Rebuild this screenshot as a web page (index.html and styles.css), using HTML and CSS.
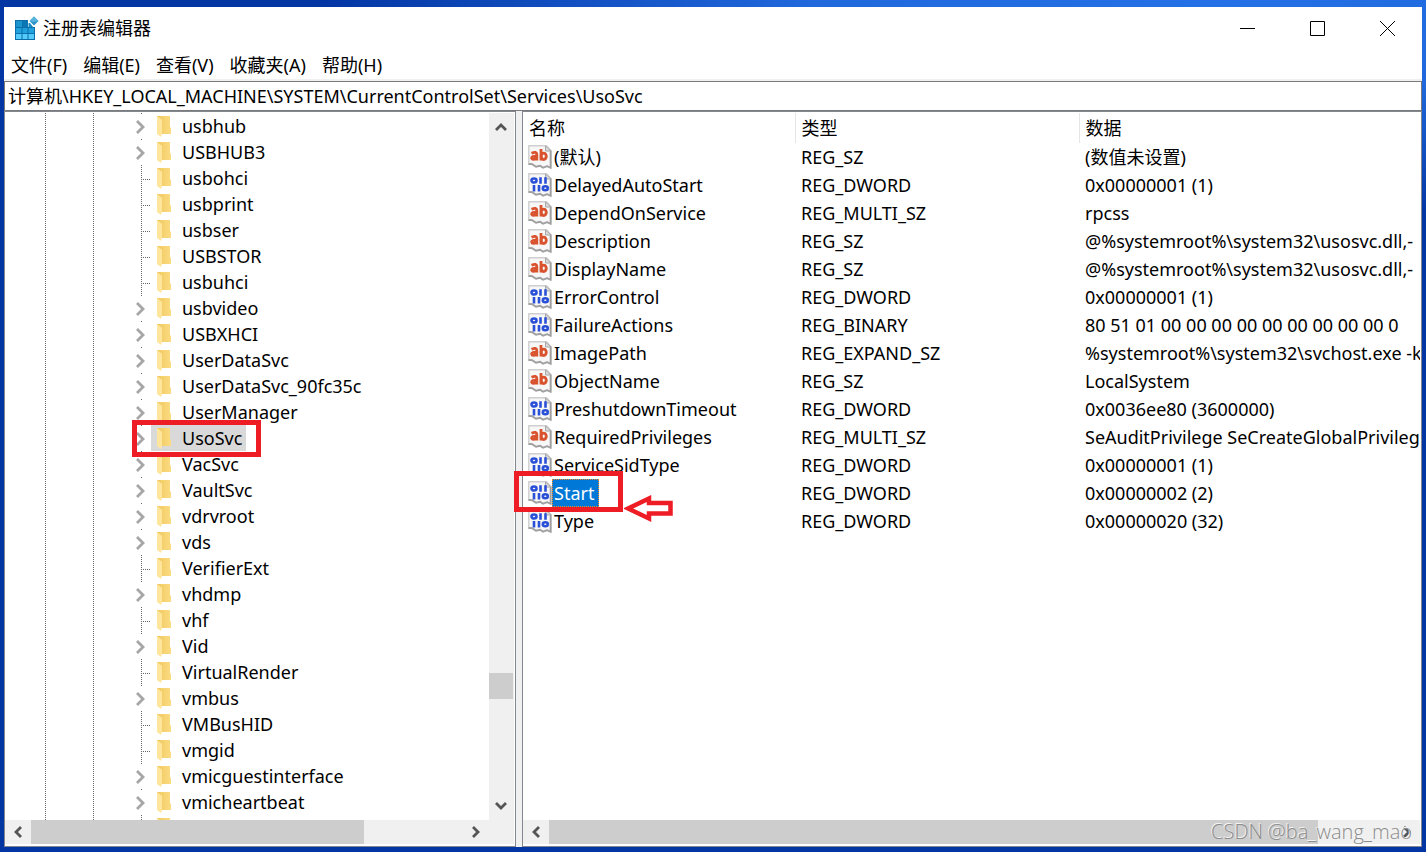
FILE: index.html
```html
<!DOCTYPE html>
<html lang="zh-CN">
<head>
<meta charset="utf-8">
<title>注册表编辑器</title>
<link rel="stylesheet" href="styles.css">
</head>
<body>
<svg class="symbols" aria-hidden="true">
  <linearGradient id="gold" x1="0" x2="1"><stop offset="0" stop-color="#efc85f"/><stop offset="1" stop-color="#fcdc82"/></linearGradient>
  <symbol id="folder" viewBox="0 0 15 22">
    <path d="M0 0H13V11L14 12V18H4Z" fill="url(#gold)"/>
    <path d="M0 0L5 4V18L4 21L0 18Z" fill="#ffe69c"/>
  </symbol>
  <symbol id="chevron" viewBox="0 0 10 14"><path d="M1 1L7 7L1 13" fill="none" stroke="#a6a6a6" stroke-width="2.8"/></symbol>
  <symbol id="arrow" viewBox="0 0 12 12"><path d="M9 1L4 6L9 11" fill="none" stroke="#555" stroke-width="2.8"/></symbol>
  <symbol id="page" viewBox="0 0 24 24">
    <path d="M.8 .8H18.5L23 5.5V22.5L19 21L15 22.5L12 20.5L8 21.5L4 19L.8 19Z" fill="#f7f7f7" stroke="#cfcfcf" stroke-width="1.4"/>
    <path d="M22.600 5.500V22.800L19 21.200L15 22.800L12 20.800L8 21.800L4 19.200L.5 19" fill="none" stroke="#a0a0a0" stroke-width="1.8"/>
    <path d="M17.500 1V6H23Z" fill="#ddd" stroke="#a8a8a8"/>
  </symbol>
  <symbol id="sz" viewBox="0 0 24 24">
    <use href="#page"/>
    <g fill="none" stroke="#d9532f" stroke-width="2.8">
      <path d="M3.500 8.200Q8.800 6 8.800 9.500V15.500M8.800 11.200Q3.400 10.800 3.600 13Q4.400 15.600 8.600 13.200"/>
      <path d="M13 4V15.500"/><ellipse cx="15.700" cy="11.300" rx="2.600" ry="3.200"/>
    </g>
  </symbol>
  <symbol id="bin" viewBox="0 0 24 24">
    <use href="#page"/>
    <g fill="none" stroke="#2b50d8" stroke-width="2.6">
      <ellipse cx="6" cy="7.500" rx="2.500" ry="2"/><path d="M12.500 4.200V10.800M17.500 4.200V10.800"/>
      <path d="M6 12V18.500M11 12V18.500"/><ellipse cx="17.300" cy="15.200" rx="2.500" ry="2"/>
    </g>
  </symbol>
</svg>

<main class="window">
  <header class="titlebar">
    <svg class="app-icon" viewBox="0 0 24 24" aria-hidden="true">
      <path d="M0 4H20V24H0Z" fill="#0a6fa8"/>
      <path d="M1 5H7V11H1Z" fill="#1b93cc"/><path d="M7.500 5H13V11H7.500Z" fill="#0b78b5"/>
      <path d="M1 12H6.500V17H1ZM7.500 12H12.500V17H7.500ZM13.500 12H19V17H13.500Z" fill="#20a0dc"/>
      <path d="M1 18H6.500V23H1ZM7.500 18H12.500V23H7.500ZM13.500 18H19V23H13.500Z" fill="#55cbfb"/>
      <path d="M13 3H16L20 9V11H13Z" fill="#fff"/>
      <path d="M13.500 7H15L18 11H13.500Z" fill="#168bc4"/>
      <path d="M19 .5L23.500 5L19 9.500L14.500 5Z" fill="#2b95c9"/><path d="M19 .5L23.500 5L19 6L14.500 5Z" fill="#57b4dd"/>
    </svg>
    <h1>注册表编辑器</h1>
    <div class="controls">
      <button aria-label="最小化"><svg viewBox="0 0 15 15"><path d="M0 7.500H15"/></svg></button>
      <button aria-label="最大化"><svg viewBox="0 0 15 15"><path d="M.5 .5H14.500V14.500H.5Z"/></svg></button>
      <button aria-label="关闭"><svg viewBox="0 0 15 15"><path d="M0 0L15 15M15 0L0 15"/></svg></button>
    </div>
  </header>
  <nav class="menu">
    <button>文件(F)</button><button>编辑(E)</button><button>查看(V)</button><button>收藏夹(A)</button><button>帮助(H)</button>
  </nav>
  <input class="address" type="text" aria-label="地址" value="计算机\HKEY_LOCAL_MACHINE\SYSTEM\CurrentControlSet\Services\UsoSvc">

  <div class="panes">
    <section class="pane tree-pane">
      <div class="viewport">
        <ul class="tree">
          <li class="parent"><svg class="chev"><use href="#chevron"/></svg><span><svg><use href="#folder"/></svg>usbhub</span></li>
          <li class="parent"><svg class="chev"><use href="#chevron"/></svg><span><svg><use href="#folder"/></svg>USBHUB3</span></li>
          <li><span><svg><use href="#folder"/></svg>usbohci</span></li>
          <li><span><svg><use href="#folder"/></svg>usbprint</span></li>
          <li><span><svg><use href="#folder"/></svg>usbser</span></li>
          <li><span><svg><use href="#folder"/></svg>USBSTOR</span></li>
          <li><span><svg><use href="#folder"/></svg>usbuhci</span></li>
          <li class="parent"><svg class="chev"><use href="#chevron"/></svg><span><svg><use href="#folder"/></svg>usbvideo</span></li>
          <li class="parent"><svg class="chev"><use href="#chevron"/></svg><span><svg><use href="#folder"/></svg>USBXHCI</span></li>
          <li class="parent"><svg class="chev"><use href="#chevron"/></svg><span><svg><use href="#folder"/></svg>UserDataSvc</span></li>
          <li class="parent"><svg class="chev"><use href="#chevron"/></svg><span><svg><use href="#folder"/></svg>UserDataSvc_90fc35c</span></li>
          <li class="parent"><svg class="chev"><use href="#chevron"/></svg><span><svg><use href="#folder"/></svg>UserManager</span></li>
          <li class="parent"><svg class="chev"><use href="#chevron"/></svg><span class="current"><svg><use href="#folder"/></svg>UsoSvc</span></li>
          <li class="parent"><svg class="chev"><use href="#chevron"/></svg><span><svg><use href="#folder"/></svg>VacSvc</span></li>
          <li class="parent"><svg class="chev"><use href="#chevron"/></svg><span><svg><use href="#folder"/></svg>VaultSvc</span></li>
          <li class="parent"><svg class="chev"><use href="#chevron"/></svg><span><svg><use href="#folder"/></svg>vdrvroot</span></li>
          <li class="parent"><svg class="chev"><use href="#chevron"/></svg><span><svg><use href="#folder"/></svg>vds</span></li>
          <li><span><svg><use href="#folder"/></svg>VerifierExt</span></li>
          <li class="parent"><svg class="chev"><use href="#chevron"/></svg><span><svg><use href="#folder"/></svg>vhdmp</span></li>
          <li><span><svg><use href="#folder"/></svg>vhf</span></li>
          <li class="parent"><svg class="chev"><use href="#chevron"/></svg><span><svg><use href="#folder"/></svg>Vid</span></li>
          <li><span><svg><use href="#folder"/></svg>VirtualRender</span></li>
          <li class="parent"><svg class="chev"><use href="#chevron"/></svg><span><svg><use href="#folder"/></svg>vmbus</span></li>
          <li><span><svg><use href="#folder"/></svg>VMBusHID</span></li>
          <li><span><svg><use href="#folder"/></svg>vmgid</span></li>
          <li class="parent"><svg class="chev"><use href="#chevron"/></svg><span><svg><use href="#folder"/></svg>vmicguestinterface</span></li>
          <li class="parent"><svg class="chev"><use href="#chevron"/></svg><span><svg><use href="#folder"/></svg>vmicheartbeat</span></li>
          <li><span><svg><use href="#folder"/></svg></span></li>
        </ul>
      </div>
      <div class="bar vertical">
        <button aria-label="向上滚动"><svg class="up"><use href="#arrow"/></svg></button>
        <div class="track"><div class="thumb"></div></div>
        <button aria-label="向下滚动"><svg class="down"><use href="#arrow"/></svg></button>
      </div>
      <div class="bar horizontal">
        <button aria-label="向左滚动"><svg><use href="#arrow"/></svg></button>
        <div class="track"><div class="thumb"></div></div>
        <button aria-label="向右滚动"><svg class="right"><use href="#arrow"/></svg></button>
      </div>
      <div class="corner"></div>
    </section>

    <section class="pane value-pane">
      <div class="viewport">
        <table>
          <colgroup><col class="c-name"><col class="c-type"><col></colgroup>
          <thead><tr><th>名称</th><th>类型</th><th>数据</th></tr></thead>
          <tbody>
            <tr><td><div class="name"><svg><use href="#sz"/></svg><span>(默认)</span></div></td><td>REG_SZ</td><td>(数值未设置)</td></tr>
            <tr><td><div class="name"><svg><use href="#bin"/></svg><span>DelayedAutoStart</span></div></td><td>REG_DWORD</td><td>0x00000001 (1)</td></tr>
            <tr><td><div class="name"><svg><use href="#sz"/></svg><span>DependOnService</span></div></td><td>REG_MULTI_SZ</td><td>rpcss</td></tr>
            <tr><td><div class="name"><svg><use href="#sz"/></svg><span>Description</span></div></td><td>REG_SZ</td><td>@%systemroot%\system32\usosvc.dll,-</td></tr>
            <tr><td><div class="name"><svg><use href="#sz"/></svg><span>DisplayName</span></div></td><td>REG_SZ</td><td>@%systemroot%\system32\usosvc.dll,-</td></tr>
            <tr><td><div class="name"><svg><use href="#bin"/></svg><span>ErrorControl</span></div></td><td>REG_DWORD</td><td>0x00000001 (1)</td></tr>
            <tr><td><div class="name"><svg><use href="#bin"/></svg><span>FailureActions</span></div></td><td>REG_BINARY</td><td>80 51 01 00 00 00 00 00 00 00 00 00 0</td></tr>
            <tr><td><div class="name"><svg><use href="#sz"/></svg><span>ImagePath</span></div></td><td>REG_EXPAND_SZ</td><td>%systemroot%\system32\svchost.exe -k</td></tr>
            <tr><td><div class="name"><svg><use href="#sz"/></svg><span>ObjectName</span></div></td><td>REG_SZ</td><td>LocalSystem</td></tr>
            <tr><td><div class="name"><svg><use href="#bin"/></svg><span>PreshutdownTimeout</span></div></td><td>REG_DWORD</td><td>0x0036ee80 (3600000)</td></tr>
            <tr><td><div class="name"><svg><use href="#sz"/></svg><span>RequiredPrivileges</span></div></td><td>REG_MULTI_SZ</td><td>SeAuditPrivilege SeCreateGlobalPrivileg</td></tr>
            <tr><td><div class="name"><svg><use href="#bin"/></svg><span>ServiceSidType</span></div></td><td>REG_DWORD</td><td>0x00000001 (1)</td></tr>
            <tr><td><div class="name"><svg><use href="#bin"/></svg><span class="selected">Start</span></div></td><td>REG_DWORD</td><td>0x00000002 (2)</td></tr>
            <tr><td><div class="name"><svg><use href="#bin"/></svg><span>Type</span></div></td><td>REG_DWORD</td><td>0x00000020 (32)</td></tr>
          </tbody>
        </table>
      </div>
      <div class="bar horizontal">
        <button aria-label="向左滚动"><svg><use href="#arrow"/></svg></button>
        <div class="track"><div class="thumb"></div></div>
        <button aria-label="向右滚动"><svg class="right"><use href="#arrow"/></svg></button>
      </div>
    </section>

    <div class="mark mark-key"></div>
    <div class="mark mark-value"></div>
    <svg class="mark-arrow" viewBox="0 0 50 28" aria-hidden="true"><path d="M4 13.500L25 3.500V8H46.500V18.500H25V23.500Z"/></svg>
    <p class="watermark">CSDN @ba_wang_mao</p>
  </div>
</main>
</body>
</html>
```
FILE: styles.css
```css
* { box-sizing: border-box; }

body {
  margin: 0;
  height: 100vh;
  padding: 7px 4px 5px;
  overflow: hidden;
  background:
    radial-gradient(ellipse 900px 220px at 85% 0, #2470e6 0, #2068dc 45%, rgba(3, 52, 160, 0) 100%),
    #0335a3;
  font: 18px/26px "Noto Sans", "Noto Sans CJK SC", sans-serif;
  color: #000;
}

.symbols { position: absolute; width: 0; height: 0; }

button {
  border: 0;
  padding: 0;
  background: none;
  font: inherit;
  color: inherit;
}

.window {
  height: 100%;
  display: flex;
  flex-direction: column;
  background: #fff;
}

.titlebar {
  display: flex;
  align-items: center;
  gap: 4px;
  height: 42px;
  padding-left: 11px;
}
.app-icon { width: 24px; height: 24px; }
.titlebar h1 { margin: 0; font-size: 18px; font-weight: 400; }
.controls { display: flex; margin-left: auto; }
.controls button { width: 70px; height: 43px; display: grid; place-items: center; }
.controls svg { width: 15px; height: 15px; fill: none; stroke: #000; }

.menu {
  display: flex;
  align-items: flex-end;
  gap: 16px;
  height: 32px;
  padding: 0 7px 1px;
  border-bottom: 2px solid #f0f0f0;
}

.address {
  width: 100%;
  height: 30px;
  padding: 0 3px 2px;
  border: 1px solid #7a7a7a;
  font: inherit;
  color: inherit;
  outline: 0;
}

.panes {
  position: relative;
  flex: 1;
  min-height: 0;
  display: grid;
  grid-template-columns: 512px minmax(0, 1fr);
  gap: 6px;
  background: #f0f0f0;
}
.pane {
  display: grid;
  min-width: 0;
  min-height: 0;
  border: 1px solid #828790;
  padding: 1px 1px 2px 0;
  background: #fff;
}
.tree-pane { grid-template: minmax(0, 1fr) 24px / minmax(0, 1fr) 25px; }
.value-pane { grid-template: minmax(0, 1fr) 24px / minmax(0, 1fr); }
.viewport { overflow: hidden; }

.tree {
  margin: 0;
  padding: 0 0 0 40px;
  list-style: none;
  background:
    repeating-linear-gradient(#666 0 1px, transparent 1px 2px) 40px 0 / 1px 100% no-repeat,
    repeating-linear-gradient(#666 0 1px, transparent 1px 2px) 88px 0 / 1px 100% no-repeat;
}
.tree li {
  display: flex;
  height: 26px;
  padding-left: 91px;
  background:
    repeating-linear-gradient(#666 0 1px, transparent 1px 2px) 96px 0 / 1px 100% no-repeat,
    repeating-linear-gradient(90deg, #666 0 1px, transparent 1px 2px) 96px 14px / 10px 1px no-repeat;
}
.tree li.parent { background: linear-gradient(#666, #666) 96px 0 / 1px 1px no-repeat; }
.tree span {
  display: flex;
  gap: 10px;
  margin-left: 15px;
  padding: 0 4px 0 6px;
}
.tree span svg { width: 15px; height: 22px; margin-top: 3px; }
.tree .chev { width: 10px; height: 14px; margin-top: 7px; }
.tree .chev + span { margin-left: 5px; }
.tree .current { background: #d9d9d9; }

.bar { display: flex; background: #f0f0f0; }
.bar.vertical { flex-direction: column; }
.bar button { flex: none; width: 26px; height: 24px; display: grid; place-items: center; }
.bar.vertical button { width: 24px; height: 28px; }
.bar svg { width: 12px; height: 12px; }
.bar .up { transform: rotate(90deg); }
.bar .down { transform: rotate(-90deg); }
.bar .right { transform: rotate(180deg); }
.track { flex: 1; display: flex; }
.vertical .track { flex-direction: column; padding-top: 532px; }
.thumb { background: #cdcdcd; }
.vertical .thumb { width: 24px; height: 26px; }
.tree-pane .horizontal .thumb { width: 77%; }
.value-pane .horizontal .thumb { width: 91%; }
.corner { background: #f0f0f0; }

table { width: 100%; table-layout: fixed; border-collapse: collapse; }
.c-name { width: 272px; }
.c-type { width: 284px; }
th, td {
  height: 28px;
  padding: 0 0 0 6px;
  overflow: hidden;
  text-align: left;
  font-weight: 400;
  white-space: nowrap;
}
th { height: 30px; border-right: 1px solid #e5e5e5; }
th:last-child { border-right: 0; }
td:first-child { padding-left: 5px; }
.name { display: flex; align-items: center; }
.name svg { width: 24px; height: 24px; }
.name span { line-height: 28px; padding: 0 5px 0 2px; }
.name .selected { background: #0078d7; color: #fff; outline: 1px dotted #f28c28; outline-offset: -1px; }

.mark { position: absolute; border: 5px solid #ee1c25; }
.mark-key { left: 128px; top: 309px; width: 129px; height: 37px; }
.mark-value { left: 510px; top: 360px; width: 109px; height: 41px; }
.mark-arrow {
  position: absolute;
  left: 620px;
  top: 384px;
  width: 50px;
  height: 28px;
  fill: #fff;
  stroke: #ee1c25;
  stroke-width: 4.5;
}
.watermark {
  position: absolute;
  right: 10px;
  bottom: 2px;
  margin: 0;
  font: 300 20px/26px "Open Sans", sans-serif;
  color: #8c8c8c;
  text-shadow: -1px -1px 0 #f4f4f4;
}
```
